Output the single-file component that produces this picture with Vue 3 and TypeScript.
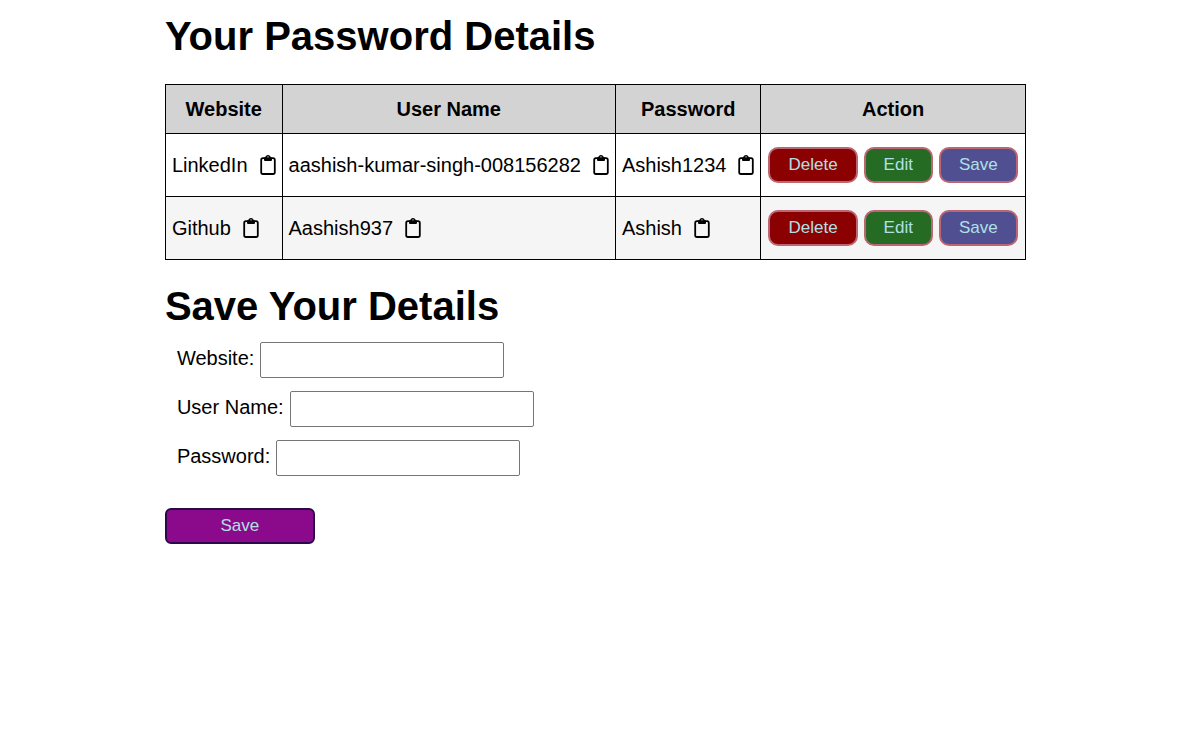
<script setup lang="ts">
import { reactive, ref } from 'vue'

interface Entry {
  website: string
  username: string
  password: string
}

const fields: (keyof Entry)[] = ['website', 'username', 'password']
const labels: Record<keyof Entry, string> = {
  website: 'Website',
  username: 'User Name',
  password: 'Password',
}

const entries = ref<Entry[]>([
  { website: 'LinkedIn', username: 'aashish-kumar-singh-008156282', password: 'Ashish1234' },
  { website: 'Github', username: 'Aashish937', password: 'Ashish' },
])

const form = reactive<Entry>({ website: '', username: '', password: '' })

function copy(text: string) {
  navigator.clipboard?.writeText(text)
}

function remove(index: number) {
  entries.value.splice(index, 1)
}

function edit(index: number) {
  Object.assign(form, entries.value[index])
}

function add() {
  if (!form.website) return
  entries.value.push({ ...form })
  Object.assign(form, { website: '', username: '', password: '' })
}
</script>

<template>
  <main class="page">
    <h1 class="title">Your Password Details</h1>
    <table class="table">
      <thead>
        <tr>
          <th v-for="field in fields" :key="field" scope="col">{{ labels[field] }}</th>
          <th scope="col">Action</th>
        </tr>
      </thead>
      <tbody>
        <tr v-for="(entry, index) in entries" :key="index">
          <td v-for="field in fields" :key="field">
            <div class="value">
              <span>{{ entry[field] }}</span>
              <button class="copy" type="button" :aria-label="'Copy ' + labels[field]" @click="copy(entry[field])">
                <svg class="icon" viewBox="0 0 16 20" aria-hidden="true">
                  <rect class="board" x="1.2" y="3.2" width="13.6" height="15.8" rx="1.8" />
                  <path
                    class="clip"
                    fill-rule="evenodd"
                    d="M4 2.500H5.100C5.500 1 6.600 0 8 0s2.500 1 2.900 2.500H12V5a1 1 0 0 1-1 1H5a1 1 0 0 1-1-1zM8 1.500a1.200 1.200 0 1 0 0 2.400a1.200 1.200 0 1 0 0-2.400z"
                  />
                </svg>
              </button>
            </div>
          </td>
          <td class="action-cell">
            <div class="actions">
              <button class="action delete" type="button" @click="remove(index)">Delete</button>
              <button class="action edit" type="button" @click="edit(index)">Edit</button>
              <button class="action save" type="button">Save</button>
            </div>
          </td>
        </tr>
      </tbody>
    </table>

    <h1 class="title">Save Your Details</h1>
    <form class="form" @submit.prevent="add">
      <div v-for="field in fields" :key="field" class="field">
        <label :for="field">{{ labels[field] }}:</label>
        <input :id="field" v-model="form[field]" type="text" />
      </div>
      <button class="submit" type="submit">Save</button>
    </form>
  </main>
</template>

<style>
body {
  margin: 0;
  background: #fff;
}
</style>

<style scoped>
.page {
  padding: 12px 14%;
  font-family: "Liberation Sans", Arial, sans-serif;
  font-size: 20px;
  line-height: 24px;
  color: #000;
}

.title {
  margin: 0;
  font-size: 40px;
  line-height: 48px;
  white-space: nowrap;
}

.table {
  margin: 24px 0 22px;
  border-collapse: collapse;
}

th,
td {
  border: 1px solid #000;
  white-space: nowrap;
}

th {
  padding: 12px 6px;
  background: #d3d3d3;
}

td {
  padding: 13px 6px;
}

.action-cell {
  padding: 13px 7px;
}

tbody tr:nth-child(even) {
  background: #f5f5f5;
}

.value {
  display: flex;
  align-items: center;
  gap: 12px;
}

.copy {
  display: flex;
  padding: 0;
  border: 0;
  background: none;
  color: inherit;
  cursor: pointer;
}

.icon {
  width: 16px;
  height: 20px;
}

.board {
  fill: none;
  stroke: currentColor;
  stroke-width: 1.8;
}

.clip {
  fill: currentColor;
}

.actions {
  display: flex;
  gap: 6px;
}

.action,
.submit {
  height: 36px;
  font-family: inherit;
  font-size: 17px;
  color: #b0e0e6;
  cursor: pointer;
}

.action {
  padding: 0 18px;
  border: 2px solid #bc6674;
  border-radius: 10px;
}

.delete {
  background: #8b0000;
}

.edit {
  background: #266b24;
}

.save {
  background: #504f91;
}

.form {
  margin-top: 12px;
}

.field {
  display: flex;
  align-items: center;
  gap: 6px;
  margin: 0 12px 13px;
}

.field label {
  padding-bottom: 4px;
}

.field input {
  box-sizing: border-box;
  width: 244px;
  height: 36px;
  padding: 0 6px;
  border: 1px solid #767676;
  border-radius: 2px;
  background: #fff;
  font: inherit;
}

.submit {
  width: 150px;
  margin-top: 19px;
  border: 2px solid #2a0a4a;
  border-radius: 6px;
  background: #8b0a8b;
}
</style>
